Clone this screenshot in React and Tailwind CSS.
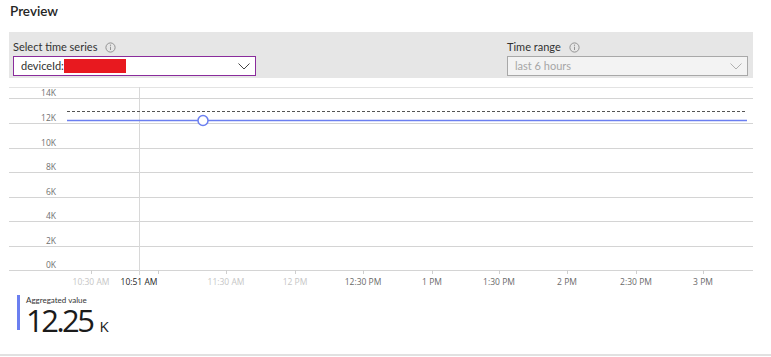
import { useState } from 'react'

const FONT = { fontFamily: '"Segoe UI", Lato, "Open Sans", sans-serif' }
const AXIS_FONT = { fontFamily: '"Segoe UI", "Open Sans", sans-serif' }

const Y_TICKS = [
  { label: '14K', y: 11 },
  { label: '12K', y: 36 },
  { label: '10K', y: 61 },
  { label: '8K', y: 85 },
  { label: '6K', y: 110 },
  { label: '4K', y: 134 },
  { label: '2K', y: 159 },
  { label: '0K', y: 183 },
]

const X_TICKS = [
  { label: '10:30 AM', x: 82, tone: 'light' },
  { label: '', x: 149 },
  { label: '11:30 AM', x: 217, tone: 'light' },
  { label: '12 PM', x: 286, tone: 'light' },
  { label: '12:30 PM', x: 354 },
  { label: '1 PM', x: 423 },
  { label: '1:30 PM', x: 490 },
  { label: '2 PM', x: 558 },
  { label: '2:30 PM', x: 627 },
  { label: '3 PM', x: 694 },
]

function InfoIcon() {
  return (
    <svg width="11" height="11" viewBox="0 0 11 11" className="ml-[8px]">
      <circle cx="5.5" cy="5.5" r="4.6" fill="none" stroke="#8a8a8a" strokeWidth="0.9" />
      <line x1="5.5" y1="4.7" x2="5.5" y2="8" stroke="#8a8a8a" strokeWidth="0.9" />
      <circle cx="5.5" cy="3.2" r="0.6" fill="#8a8a8a" />
    </svg>
  )
}

function Chevron({ color }) {
  return (
    <svg width="12" height="7" viewBox="0 0 12 7">
      <polyline points="0.5,0.5 6,6 11.5,0.5" fill="none" stroke={color} strokeWidth="1" />
    </svg>
  )
}

function Chart() {
  return (
    <svg width="744" height="205" viewBox="0 0 744 205" className="block">
      <line x1="0" y1="0.5" x2="744" y2="0.5" stroke="#e3e3e3" />
      {Y_TICKS.map(t => (
        <g key={t.label}>
          <line x1="0" y1={t.y + 0.5} x2="744" y2={t.y + 0.5} stroke="#d4d4d4" />
          <text x="47" y={t.y - 2} textAnchor="end" fontSize="8.5" fill="#707070" style={AXIS_FONT}>{t.label}</text>
        </g>
      ))}
      <line x1="130.5" y1="0" x2="130.5" y2="188" stroke="#d8d8d8" />
      {X_TICKS.map(t => (
        <g key={t.x}>
          <line x1={t.x + 0.5} y1="183" x2={t.x + 0.5} y2="187" stroke="#cfcfcf" />
          {t.label && (
            <text x={t.x} y="198" textAnchor="middle" fontSize="8.5" fill={t.tone === 'light' ? '#c6c6c6' : '#6a6a6a'} style={AXIS_FONT}>{t.label}</text>
          )}
        </g>
      ))}
      <text x="130" y="198" textAnchor="middle" fontSize="8.5" fill="#252525" style={AXIS_FONT}>10:51 AM</text>
      <line x1="58" y1="24.5" x2="737" y2="24.5" stroke="#555" strokeDasharray="3 2" />
      <line x1="58" y1="33.5" x2="738" y2="33.5" stroke="#6b7ff0" strokeWidth="1.5" />
      <circle cx="194" cy="33.5" r="5" fill="white" stroke="#6b7ff0" strokeWidth="1.5" />
    </svg>
  )
}

export default function App() {
  const [series] = useState('deviceId:')

  return (
    <div className="w-[771px] h-[357px] bg-white text-[#252525] overflow-hidden relative" style={FONT}>
      <h2 className="text-[13.5px] font-semibold leading-none pl-[10px] pt-[5px] h-[32px]">Preview</h2>

      <div className="mx-[9px] w-[744px] h-[46px] bg-[#e6e6e6] flex justify-between pl-[4px] pr-[5px] pt-[8px]">
        <div className="w-[243px]">
          <div className="flex items-center text-[11px] leading-[14px] h-[14px] text-[#323232]">
            Select time series <InfoIcon />
          </div>
          <div className="mt-[2px] h-[20px] bg-white border border-[#8a2c9c] flex items-center justify-between pl-[7px] pr-[5px]">
            <div className="flex items-center text-[11px] text-[#323232]">
              {series}
              <span className="inline-block w-[62px] h-[14px] bg-[#e8191f]" />
            </div>
            <Chevron color="#444" />
          </div>
        </div>
        <div className="w-[241px]">
          <div className="flex items-center text-[11px] leading-[14px] h-[14px] text-[#323232]">
            Time range <InfoIcon />
          </div>
          <div className="mt-[2px] h-[20px] bg-[#f3f3f3] border border-[#a8a8a8] flex items-center justify-between pl-[7px] pr-[5px]">
            <span className="text-[11px] text-[#a6a6a6]">last 6 hours</span>
            <Chevron color="#b0b0b0" />
          </div>
        </div>
      </div>

      <div className="ml-[9px] mt-[9px]">
        <Chart />
      </div>

      <div className="flex ml-[17px] mt-[3px]">
        <div className="w-[3px] h-[35px] bg-[#6b7ff0]" />
        <div className="ml-[6px]">
          <div className="text-[8px] leading-[10px] text-[#333]">Aggregated value</div>
          <div className="flex items-baseline leading-[22px] mt-[4px] h-[22px]" style={AXIS_FONT}>
            <span className="text-[31px] text-[#1b1b1b] tracking-[-2.5px]">12.25</span>
            <span className="text-[15px] ml-[7px] text-[#1b1b1b]">K</span>
          </div>
        </div>
      </div>

      <div className="absolute left-0 right-0 top-[354px] h-[2px] bg-[#e1e1e1]" />
    </div>
  )
}
